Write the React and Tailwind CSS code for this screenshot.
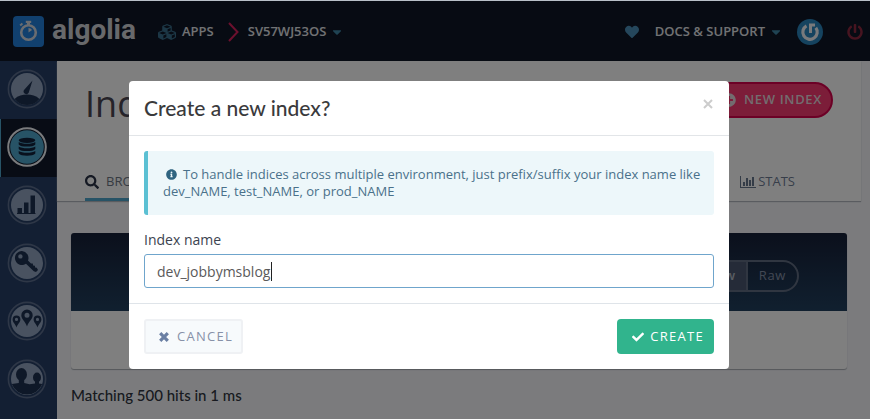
import { FaCubes, FaHeart, FaCaretDown, FaPowerOff, FaSearch, FaInfoCircle, FaCheck, FaPlusCircle } from "react-icons/fa";

const SANS = "font-['Open_Sans',sans-serif]";
const HEADING = "font-['Lato','Open_Sans',sans-serif]";

function LogoMark() {
  return (
    <svg viewBox="0 0 31 31" className="size-[31px]" aria-hidden="true">
      <rect width="31" height="31" rx="4" fill="#2280dc" />
      <g fill="none" stroke="#d4d9e0">
        <circle cx="15.5" cy="16.5" r="7.3" strokeWidth="2.6" />
        <path d="M12.8 5.9h5.4" strokeWidth="2.2" />
        <path d="M7.2 9.4l2.2-2" strokeWidth="2" />
        <path d="M15.5 6v3" strokeWidth="3" />
      </g>
      <path d="M15.5 16.5v-4.400a4.400 4.400 0 0 1 3.600 2z" fill="#d4d9e0" />
    </svg>
  );
}

function Badge({ children, active }) {
  return (
    <svg viewBox="0 0 40 40" className="size-10" aria-hidden="true">
      {active ? (
        <>
          <circle cx="20" cy="20" r="18.8" fill="#10192b" stroke="#f4f6fa" strokeWidth="2" />
          <circle cx="20" cy="20" r="16.8" fill="#4fa6cc" />
        </>
      ) : (
        <>
          <circle cx="20" cy="20" r="18.6" fill="#263f66" stroke="#5d6e8e" strokeWidth="1.6" />
          <circle cx="20" cy="20" r="16" fill="#93a5c0" />
        </>
      )}
      {children}
    </svg>
  );
}

const ink = "#1d3050";

function Gauge() {
  return (
    <Badge>
      <path d="M7.5 30C11 26.500 15.500 25.500 20 25.500s9 1 12.500 4.500A16 16 0 0 1 7.500 30z" fill={ink} />
      <path d="M25.500 11.500L17 21a2.700 2.700 0 0 0 4.700 2.700z" fill={ink} />
    </Badge>
  );
}

function Database() {
  return (
    <Badge active>
      <g fill="#10203a">
        <ellipse cx="20" cy="13.300" rx="8.300" ry="2.600" />
        <path d="M11.700 15c3 2.400 13.600 2.400 16.600 0v2.400c-2 2.900-14.600 2.900-16.600 0z" />
        <path d="M11.700 19.500c3 2.400 13.600 2.400 16.600 0v2.400c-2 2.900-14.600 2.900-16.600 0z" />
        <path d="M11.700 24c3 2.400 13.600 2.400 16.600 0v2.600c-2 2.900-14.600 2.900-16.600 0z" />
      </g>
    </Badge>
  );
}

function Bars() {
  return (
    <Badge>
      <path d="M10.500 23h4.500v5h-4.500zM17 17.500h4.500V28H17zM23.500 10.500H28V28h-4.500z" fill={ink} />
      <path d="M10 28.500h18.500" stroke={ink} />
    </Badge>
  );
}

function Key() {
  return (
    <Badge>
      <path
        fillRule="evenodd"
        d="M15 8a7 7 0 1 0 4 12.700l7.800 7.500 2.200.8 2-2-1.200-2.200-1.700-.3-.2-1.800-1.800-.2-.3-1.900-1.800-.2-3-2.900A7 7 0 0 0 15 8zm-1.600 3.200a2.200 2.200 0 1 1 0 4.400 2.200 2.200 0 0 1 0-4.400z"
        fill={ink}
      />
    </Badge>
  );
}

function Pins() {
  return (
    <Badge>
      <g fill={ink} fillRule="evenodd">
        <path d="M20 8.500a5.700 5.700 0 0 0-5.700 5.700c0 4 4.200 6.300 5.700 11.300 1.500-5 5.700-7.300 5.700-11.300A5.700 5.700 0 0 0 20 8.500zm0 3.200a2.500 2.500 0 1 1 0 5 2.500 2.500 0 0 1 0-5z" />
        <path d="M9.500 14.500a3.900 3.900 0 0 0-3.900 3.900c0 3 2.900 4.300 3.900 8.100 1-3.800 3.900-5.100 3.900-8.100a3.900 3.900 0 0 0-3.900-3.900zm0 2.300a1.600 1.600 0 1 1 0 3.200 1.600 1.600 0 0 1 0-3.200z" />
        <path d="M30.500 14.500a3.900 3.900 0 0 0-3.900 3.900c0 3 2.900 4.300 3.900 8.100 1-3.800 3.900-5.100 3.900-8.100a3.900 3.900 0 0 0-3.900-3.900zm0 2.300a1.600 1.600 0 1 1 0 3.200 1.600 1.600 0 0 1 0-3.200z" />
      </g>
    </Badge>
  );
}

function People() {
  return (
    <Badge>
      <g fill={ink}>
        <ellipse cx="14.500" cy="15.500" rx="5.500" ry="6.500" />
        <ellipse cx="30" cy="18.500" rx="4" ry="5" />
        <path d="M11.800 20h5.400v4l5.300 1.200 5.500-.7V22h4v2.500l3.200.5A16.200 16.200 0 0 1 4.800 25l7-1z" />
      </g>
    </Badge>
  );
}

const sections = [
  { name: "Dashboard", Icon: Gauge },
  { name: "Indices", Icon: Database, active: true },
  { name: "Analytics", Icon: Bars },
  { name: "API keys", Icon: Key },
  { name: "Infrastructure", Icon: Pins },
  { name: "Team", Icon: People },
];

function TopBar() {
  return (
    <header className="flex h-[61px] items-center bg-[#0e1626] pt-[2px] pl-[13px] pr-[7px] text-[13px] font-semibold text-[#e2e4e8]">
      <a href="#home" className="flex items-center gap-2">
        <LogoMark />
        <span className="-mt-1 font-['Roboto',sans-serif] text-[28px] leading-9 font-bold text-[#d0d2d6]">algolia</span>
      </a>
      <a href="#apps" className="ml-[22px] flex items-center gap-[6px]">
        <FaCubes className="size-[18px] text-[#386f8c]" />
        APPS
      </a>
      <svg viewBox="0 0 12 20" className="ml-[14px] h-5 w-3" fill="none" stroke="#d8215c" strokeWidth="2" aria-hidden="true">
        <path d="M1 1l8.500 9L1 19" />
      </svg>
      <button className="ml-2 flex items-center gap-1">
        SV57WJ53OS
        <FaCaretDown className="size-[14px] text-[#3f86a6]" />
      </button>
      <FaHeart className="ml-auto size-[14px] text-[#4a8fb8]" />
      <button className="ml-4 flex items-center gap-1">
        DOCS &amp; SUPPORT
        <FaCaretDown className="size-[14px] text-[#3f86a6]" />
      </button>
      <a href="#account" aria-label="Account" className="ml-[14px]">
        <svg viewBox="0 0 26 26" className="size-[26px]" fill="none" aria-hidden="true">
          <circle cx="13" cy="13" r="13" fill="#2a86bf" />
          <path d="M9.500 6.800a7.200 7.200 0 1 0 9.300 2" stroke="#f2f5f8" strokeWidth="3.200" />
          <path d="M13.500 4.500V14M13.500 6h4.500" stroke="#f2f5f8" strokeWidth="3" />
        </svg>
      </a>
      <a href="#logout" aria-label="Log out" className="ml-6">
        <FaPowerOff className="size-4 text-[#8e2940]" />
      </a>
    </header>
  );
}

function SideNav() {
  return (
    <nav className="w-[57px] shrink-0 bg-[#263f66]">
      {sections.map(({ name, Icon, active }) => (
        <a
          key={name}
          href={"#" + name}
          aria-label={name}
          className={
            "flex h-[58px] items-start justify-center border-l pt-2 pr-1 " +
            (active ? "border-[#4fa6cc] bg-[#10192b]" : "border-[#263f66]")
          }
        >
          <Icon />
        </a>
      ))}
    </nav>
  );
}

function Page() {
  return (
    <main className="min-w-0 flex-1 pr-[9px]">
      <section className="bg-white px-7 shadow-[0_1px_1px_#b5b9c0]">
        <div className="flex h-[103px] items-start justify-between pt-[21px]">
          <h1 className="text-[36px] leading-[44px] font-medium text-[#4a4652]">Indices</h1>
          <button className="flex h-9 items-center gap-2 rounded-full border-2 border-[#d9004c] bg-[#f83a72] pr-[9px] pl-[10px] text-[13px] font-semibold tracking-wider text-[#e6d8de]">
            <FaPlusCircle className="size-[14px]" />
            NEW INDEX
          </button>
        </div>
        <div className="flex h-[37px] justify-between pr-[38px] text-[13px]">
          <a href="#browse" className="flex items-center gap-[7px] border-b-[3px] border-[#4fa6cc] pt-[2px] text-[#6d7684]">
            <FaSearch className="size-[14px] text-[#2a3346]" />
            BROWSE
          </a>
          <a href="#stats" className="flex items-center gap-[2px] pt-[2px] pb-[3px] text-[#6f7d95]">
            <svg viewBox="0 0 16 12" className="h-3 w-4" fill="#68788f" aria-hidden="true">
              <path d="M0 0h1v11h15v1H0zM3 6h2v4H3zM6 2h2v8H6zM9 4h2v6H9zM12 1h2v9h-2z" />
            </svg>
            STATS
          </a>
        </div>
      </section>
      <section className="px-[14px] pt-8">
        <div className="overflow-hidden rounded-[3px] bg-white shadow-[0_1px_1px_#a9adb4]">
          <div className="flex h-[78px] items-center justify-end bg-linear-to-b from-[#162038] to-[#21405f] pt-2 pr-12 text-[13px]">
            <div className="flex h-8 overflow-hidden rounded-full border-2 border-[#616d82]">
              <button className="bg-[#4a5770] px-[10px] font-semibold tracking-wider text-[#b4bac4]">Preview</button>
              <button className="border-l-2 border-[#616d82] px-[11px] tracking-wider text-[#8591a8]">Raw</button>
            </div>
          </div>
          <div className="h-[58px]" />
        </div>
        <p className={HEADING + " mt-4 text-[15px] leading-5 font-medium text-[#30353f]"}>Matching 500 hits in 1 ms</p>
      </section>
    </main>
  );
}

function CreateIndexDialog() {
  return (
    <div role="dialog" aria-modal="true" aria-labelledby="dialog-title" className="w-[600px] rounded bg-white">
      <div className="flex h-[55px] items-center justify-between border-b border-[#e2e5e8] px-[15px]">
        <h2 id="dialog-title" className={HEADING + " text-[21px] leading-7 font-medium text-[#3a3a3c]"}>
          Create a new index?
        </h2>
        <button aria-label="Close" className="-mt-2 text-[#cccccc]">
          <svg viewBox="0 0 12 12" className="size-3" stroke="currentColor" strokeWidth="2" aria-hidden="true">
            <path d="M2 2l8 8M10 2l-8 8" />
          </svg>
        </button>
      </div>
      <form className="m-0" onSubmit={(e) => e.preventDefault()}>
        <div className="p-[15px]">
          <div className="rounded-[3px] border-l-4 border-[#5bc0d3] bg-[#edf7fa] py-[15px] pr-1 pl-[15px] text-[13px] leading-[17px] text-[#4a718a]">
            <FaInfoCircle className="mr-[6px] ml-[3px] inline size-[11px] align-[-1px] text-[#2f6480]" />
            To handle indices across multiple environment, just prefix/suffix your index name like dev_NAME, test_NAME, or prod_NAME
          </div>
          <label htmlFor="index-name" className="mt-[15px] mb-1 block text-[14px] leading-5 font-medium text-[#3c4350]">
            Index name
          </label>
          <div className="relative">
            <input
              id="index-name"
              type="text"
              defaultValue="dev_jobbymsblog"
              className="block h-[34px] w-full rounded-[3px] border border-[#6fa5cc] bg-white px-3 text-[14px] text-[#5a5a5a] outline-none"
            />
            <span className="absolute top-2 left-[127px] h-[19px] w-px bg-[#222222]" aria-hidden="true" />
          </div>
        </div>
        <div className="flex justify-between border-t border-[#dfe4e9] p-[15px] text-[13px]">
          <button type="button" className="flex h-[35px] items-center gap-2 rounded-[3px] border-2 border-[#eff1f4] bg-[#f7fafc] pr-2 pl-[13px] tracking-widest text-[#8791a8]">
            <svg viewBox="0 0 10 10" className="size-[10px]" stroke="#6a7fa3" strokeWidth="3.200" aria-hidden="true">
              <path d="M1.200 1.200l7.600 7.600M8.800 1.200L1.200 8.800" />
            </svg>
            CANCEL
          </button>
          <button type="submit" className="flex h-[35px] items-center gap-[6px] rounded bg-[#31b48d] pr-[10px] pl-[15px] font-medium tracking-widest text-white">
            <FaCheck className="size-3" />
            CREATE
          </button>
        </div>
      </form>
    </div>
  );
}

export default function App() {
  return (
    <div className={SANS + " flex h-screen flex-col overflow-hidden bg-[#f6f7fb]"}>
      <TopBar />
      <div className="flex flex-1">
        <SideNav />
        <Page />
      </div>
      <div className="fixed inset-0 flex items-start justify-center border-t border-[#b8c0c8] bg-black/50 pt-20 pr-3">
        <CreateIndexDialog />
      </div>
    </div>
  );
}
